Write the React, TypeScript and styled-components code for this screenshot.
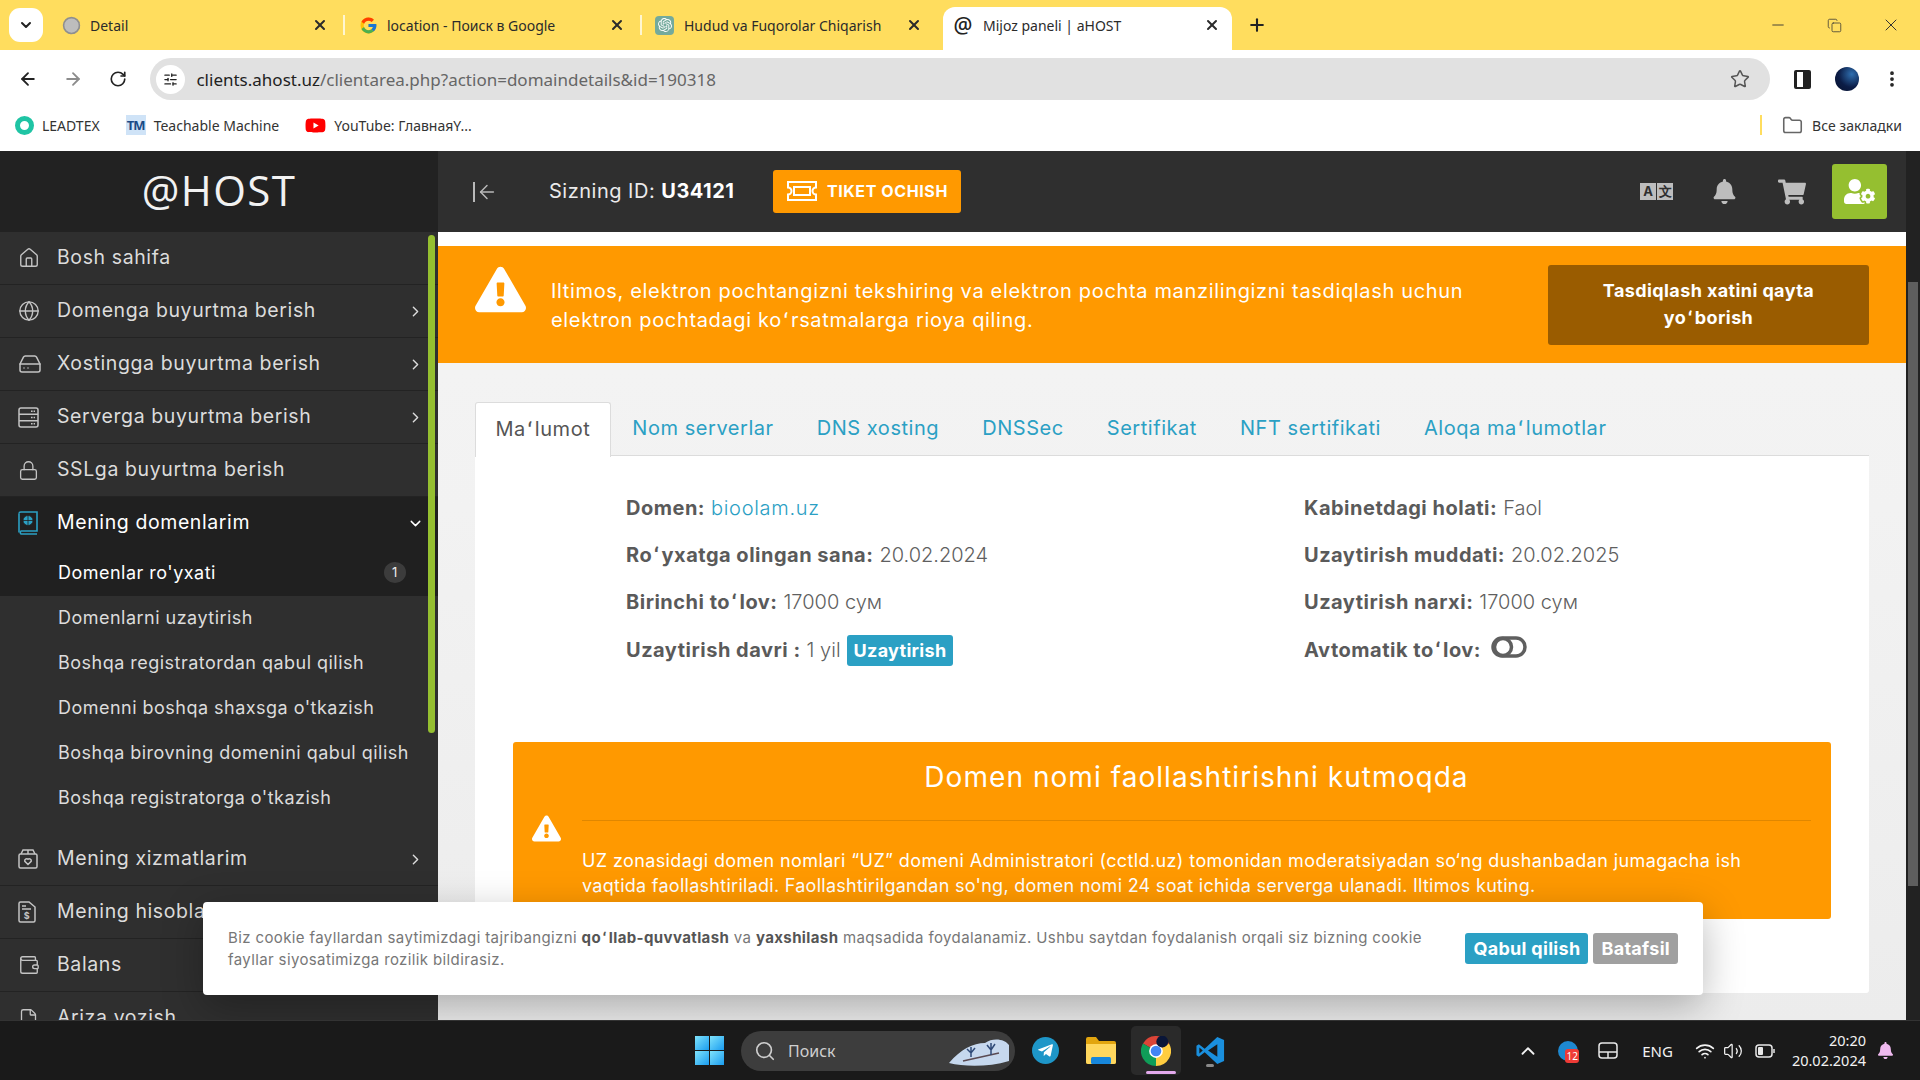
import React from "react";
import styled, { createGlobalStyle } from "styled-components";
import {
  ArrowLeft,
  ArrowRight,
  ChevronDown,
  ChevronRight,
  ChevronUp,
  Copy,
  Earth,
  File,
  Folder,
  Globe,
  HardDrive,
  House,
  Lock,
  Minus,
  MoreVertical,
  Plus,
  RotateCw,
  Search,
  SlidersHorizontal,
  Star,
  Volume2,
  Wallet,
  Wifi,
  X,
} from "lucide-react";
import { FaBell, FaExclamationTriangle, FaShoppingCart, FaTelegramPlane, FaUserCog, FaYoutube } from "react-icons/fa";
import { FcGoogle } from "react-icons/fc";
import { SiOpenai } from "react-icons/si";

const mont = `Inter, "Liberation Sans", sans-serif`;
const ui = `"Noto Sans", "Liberation Sans", sans-serif`;

const GlobalStyle = createGlobalStyle`
  html, body { margin: 0; padding: 0; width: 1920px; height: 1080px; overflow: hidden; }
  body { font-family: ${ui}; background: #fff; }
  * { box-sizing: border-box; }
`;

const Screen = styled.div`
  width: 1920px;
  height: 1080px;
  display: flex;
  flex-direction: column;
  overflow: hidden;
`;

/* browser tabs */
const TabStrip = styled.div`
  height: 50px;
  flex: none;
  background: #ffdd5e;
  display: flex;
  align-items: flex-end;
  padding-left: 9px;
`;

const TabMenuBtn = styled.div`
  width: 34px;
  height: 34px;
  margin: 0 6px 8px 0;
  background: #fff;
  border-radius: 11px;
  display: flex;
  align-items: center;
  justify-content: center;
  color: #222;
`;

const BrowserTab = styled.div<{ $active?: boolean; $sep?: boolean }>`
  width: ${(p) => (p.$active ? "289px" : "297px")};
  height: ${(p) => (p.$active ? "43px" : "50px")};
  margin-left: ${(p) => (p.$active ? "3px" : "0")};
  padding: ${(p) => (p.$active ? "0 12px 7px 10px" : "0 18px 0 12px")};
  display: flex;
  align-items: center;
  gap: ${(p) => (p.$active ? "10px" : "9px")};
  background: ${(p) => (p.$active ? "#fff" : "transparent")};
  border-radius: 12px 12px 0 0;
  position: relative;
  color: #2b2b2b;
  font-size: 14px;
  &::after {
    content: "";
    display: ${(p) => (p.$sep ? "block" : "none")};
    position: absolute;
    right: 1px;
    top: 15px;
    width: 2px;
    height: 20px;
    background: #fff6d0;
  }
`;

const Favicon = styled.span`
  width: 20px;
  height: 20px;
  flex: none;
  display: flex;
  align-items: center;
  justify-content: center;
  font-size: 21px;
  font-weight: 500;
  color: #222;
`;

const GptIcon = styled.span`
  width: 19px;
  height: 19px;
  flex: none;
  margin-right: 1px;
  border-radius: 4px;
  background: #74aa9c;
  color: #fff;
  display: flex;
  align-items: center;
  justify-content: center;
`;

const TabTitle = styled.span`
  flex: 1;
  white-space: nowrap;
  overflow: hidden;
`;

const NewTab = styled.div`
  margin: 0 0 15px 15px;
  color: #222;
  display: flex;
`;

const WindowControls = styled.div`
  margin-left: auto;
  height: 50px;
  display: flex;
  align-items: center;
  gap: 39.5px;
  padding-right: 19px;
  color: #333;
`;

/* address bar */
const Toolbar = styled.div`
  height: 55px;
  flex: none;
  background: #fff;
  display: flex;
  align-items: center;
  padding: 3px 18px 0 18px;
`;

const NavBtn = styled.span<{ $muted?: boolean }>`
  width: 45.5px;
  display: flex;
  color: ${(p) => (p.$muted ? "#8c8c8c" : "#222")};
`;

const Omnibox = styled.div`
  margin-left: -4px;
  width: 1620px;
  height: 42px;
  background: #e1e1e1;
  border-radius: 21px;
  display: flex;
  align-items: center;
  padding: 0 20px 0 6px;
  font-size: 17px;
  color: #666;
`;

const SiteInfo = styled.span`
  width: 29px;
  height: 29px;
  border-radius: 50%;
  background: #fff;
  margin-right: 11px;
  display: flex;
  align-items: center;
  justify-content: center;
  color: #222;
`;

const UrlHost = styled.span`
  color: #222;
`;

const StarBox = styled.span`
  margin-left: auto;
  display: flex;
  color: #555;
`;

const ToolActions = styled.div`
  display: flex;
  align-items: center;
  margin-left: 24px;
  gap: 23.5px;
  color: #222;
`;

const SidePanelIcon = styled.span`
  width: 17px;
  height: 19px;
  border: 2.5px solid #222;
  border-left-width: 3px;
  border-right-width: 8px;
  border-radius: 2px;
`;

const Avatar = styled.span`
  width: 24px;
  height: 24px;
  border-radius: 50%;
  background: radial-gradient(circle at 70% 30%, #2f6fb0 0%, #0b1c46 55%, #08122e 100%);
`;

/* bookmarks */
const BookmarkBar = styled.div`
  height: 46px;
  flex: none;
  background: #fff;
  display: flex;
  align-items: center;
  padding: 0 18px 6px 15px;
  font-size: 14px;
  color: #333;
`;

const Bookmark = styled.div`
  display: flex;
  align-items: center;
  gap: 8px;
  margin-right: 26px;
`;

const LeadIcon = styled.span`
  width: 19px;
  height: 19px;
  border-radius: 50%;
  border: 5px solid #1fc4a4;
  background: #fff;
`;

const TmIcon = styled.span`
  width: 20px;
  height: 20px;
  background: #cfe3f7;
  color: #1a4a86;
  font-size: 13px;
  font-weight: 700;
  display: flex;
  align-items: center;
  justify-content: center;
  letter-spacing: -1px;
`;

const AllBookmarks = styled.div`
  margin-left: auto;
  display: flex;
  align-items: center;
  gap: 9px;
  border-left: 2px solid #ffdd5e;
  padding-left: 20px;
  height: 20px;
  color: #333;
  svg { color: #666; }
`;

/* site */
const Main = styled.div`
  flex: 1;
  min-height: 0;
  display: flex;
  position: relative;
  overflow: hidden;
  font-family: ${mont};
`;

const Sidebar = styled.aside`
  width: 438px;
  flex: none;
  background: #2f2f2f;
  display: flex;
  flex-direction: column;
  overflow: hidden;
`;

const LogoBar = styled.div`
  height: 81px;
  flex: none;
  background: #222;
  color: #f2f2f2;
  display: flex;
  align-items: center;
  justify-content: center;
  padding-bottom: 4px;
  font-family: "Open Sans", sans-serif;
  font-size: 42px;
  letter-spacing: 1.4px;
  font-weight: 400;
`;

const Nav = styled.nav`
  position: relative;
  flex: 1;
  min-height: 0;
`;

const NavThumb = styled.div`
  position: absolute;
  left: 428px;
  top: 3px;
  width: 7px;
  height: 498px;
  border-radius: 4px;
  background: #95bf30;
`;

const NavItem = styled.div<{ $open?: boolean }>`
  height: 53px;
  display: flex;
  align-items: center;
  padding: 0 14px 0 18px;
  border-bottom: 1px solid ${(p) => (p.$open ? "transparent" : "#232323")};
  background: ${(p) => (p.$open ? "#202020" : "transparent")};
  color: ${(p) => (p.$open ? "#fff" : "#dcdcdc")};
  font-size: 19.5px;
  letter-spacing: 0.6px;
`;

const NavIcon = styled.span<{ $open?: boolean }>`
  width: 39px;
  flex: none;
  display: flex;
  color: ${(p) => (p.$open ? "#2ba0c4" : "#c4c4c4")};
`;

const NavLabel = styled.span`
  flex: 1;
  white-space: nowrap;
  padding-bottom: 2px;
`;

const SubMenu = styled.div`
  padding-bottom: 12px;
`;

const SubItem = styled.div<{ $active?: boolean }>`
  height: ${(p) => (p.$active ? "46px" : "45px")};
  display: flex;
  align-items: center;
  padding: 0 32px 2px 58px;
  font-size: 18px;
  letter-spacing: 0.48px;
  color: ${(p) => (p.$active ? "#fff" : "#dcdcdc")};
  background: ${(p) => (p.$active ? "#202020" : "transparent")};
  white-space: nowrap;
`;

const CountBadge = styled.span`
  margin-left: auto;
  width: 22px;
  height: 21px;
  border-radius: 50%;
  background: #3c3c3c;
  color: #eee;
  font-size: 13px;
  display: flex;
  align-items: center;
  justify-content: center;
`;

const RightCol = styled.div`
  flex: 1;
  min-width: 0;
  display: flex;
  flex-direction: column;
`;

const Header = styled.header`
  height: 81px;
  flex: none;
  background: #2f2f2f;
  display: flex;
  align-items: center;
  padding: 0 19px 0 35px;
  color: #eaeaea;
`;

const CollapseBtn = styled.span`
  display: flex;
  align-items: center;
  color: #b9b9b9;
  margin-right: 51px;
`;

const CollapseBar = styled.span`
  width: 2px;
  height: 20px;
  background: #b9b9b9;
  margin-right: 1px;
`;

const ClientId = styled.span`
  font-size: 20px;
  letter-spacing: 0.5px;
  margin-right: 39px;
  padding-bottom: 1px;
  b { font-weight: 700; color: #fff; }
`;

const TicketBtn = styled.div`
  width: 188px;
  height: 43px;
  background: #ff9900;
  border-radius: 3px;
  color: #fff;
  display: flex;
  align-items: center;
  justify-content: center;
  gap: 10px;
  font-size: 16px;
  font-weight: 700;
  letter-spacing: 0.6px;
  padding-bottom: 1px;
`;

const HeaderIcons = styled.div`
  margin-left: auto;
  display: flex;
  align-items: center;
  color: #bdbdbd;
`;

const TranslateIcon = styled.span`
  display: flex;
  width: 33px;
  height: 17px;
  gap: 1px;
  margin-right: 39px;
`;

const TranslateCell = styled.span`
  flex: 1;
  background: #bdbdbd;
  color: #2f2f2f;
  font-size: 13px;
  font-weight: 700;
  line-height: 17px;
  text-align: center;
`;

const CartBox = styled.span`
  display: flex;
  margin: 0 26px 0 41px;
`;

const UserBtn = styled.span`
  width: 55px;
  height: 55px;
  background: #95bf30;
  border-radius: 3px;
  color: #fff;
  display: flex;
  align-items: center;
  justify-content: center;
`;

const Content = styled.main`
  flex: 1;
  min-height: 0;
  background: linear-gradient(#f4f4f4 0%, #f2f2f2 35%, #ececec 100%);
  overflow: hidden;
  padding-top: 14px;
  box-shadow: inset 0 14px 0 #fff;
`;

const TopAlert = styled.div`
  height: 117px;
  background: #ff9900;
  color: #fff;
  display: flex;
  padding: 19px 37px 0 37px;
`;

const TopAlertIcon = styled.span`
  width: 51px;
  height: 51px;
  margin-top: -1px;
  flex: none;
  display: flex;
  margin-right: 25px;
`;

const TopAlertText = styled.p`
  margin: 12px 0 0;
  font-size: 20px;
  line-height: 29px;
  letter-spacing: 0.66px;
  white-space: nowrap;
`;

const ResendBtn = styled.div`
  margin-left: auto;
  width: 321px;
  height: 80px;
  background: #9a5c00;
  border-radius: 3px;
  padding-top: 12px;
  text-align: center;
  font-size: 18px;
  font-weight: 700;
  line-height: 27px;
  letter-spacing: 0.4px;
`;

const TabsWrap = styled.div`
  padding: 39px 37px 0;
`;

const TabRow = styled.div`
  display: flex;
  height: 54px;
  border-bottom: 1px solid #dcdcdc;
`;

const PageTab = styled.div<{ $active?: boolean }>`
  height: ${(p) => (p.$active ? "55px" : "53px")};
  padding: 0 ${(p) => (p.$active ? "19.5px" : "21.5px")} 2px;
  display: flex;
  align-items: center;
  font-size: 20px;
  letter-spacing: 0.55px;
  white-space: nowrap;
  color: ${(p) => (p.$active ? "#555" : "#2ba0c4")};
  background: ${(p) => (p.$active ? "#fff" : "transparent")};
  border: ${(p) => (p.$active ? "1px solid #dcdcdc" : "none")};
  border-bottom: none;
  border-radius: 3px 3px 0 0;
`;

const Okina = styled.span`
  margin: 0 1.5px;
`;

const Card = styled.section`
  background: #fff;
  height: 537px;
  padding: 28px 38px 0;
  border-radius: 0 0 3px 3px;
`;

const InfoGrid = styled.div`
  display: grid;
  grid-template-columns: 678px 1fr;
  grid-auto-rows: 47.3px;
  padding-left: 113px;
`;

const InfoCell = styled.div`
  display: flex;
  align-items: center;
  gap: 6px;
  font-size: 20px;
  font-weight: 300;
  color: #5f5f5f;
  white-space: nowrap;
  letter-spacing: 0;
  b { font-weight: 700; color: #5a5a5a; letter-spacing: 0.5px; }
`;

const InfoLink = styled.span`
  color: #2ba0c4;
  letter-spacing: 0.7px;
`;

const SmallBtn = styled.span<{ $gray?: boolean }>`
  height: 31px;
  padding: 0 7px;
  margin-top: 1px;
  display: inline-flex;
  align-items: center;
  border-radius: 3px;
  background: ${(p) => (p.$gray ? "#a0a0a0" : "#2ba0c4")};
  color: #fff;
  font-size: 18px;
  font-weight: 700;
  letter-spacing: 0.3px;
`;

const CookieBtn = styled(SmallBtn)`
  padding: 0 8px;
  margin-top: 0;
`;

const Toggle = styled.span`
  display: inline-flex;
  position: relative;
  top: -3px;
  margin-left: 4px;
  color: #5f5f5f;
`;

const PendingBox = styled.div`
  margin-top: 69px;
  background: #ff9900;
  border-radius: 3px;
  color: #fff;
  display: flex;
  align-items: center;
  padding: 17px 20px 21px 19px;
`;

const PendingIcon = styled.span`
  width: 50px;
  flex: none;
  display: flex;
`;

const PendingBody = styled.div`
  flex: 1;
`;

const PendingTitle = styled.div`
  text-align: center;
  font-size: 28px;
  line-height: 36px;
  letter-spacing: 1.05px;
  padding-bottom: 25px;
  border-bottom: 1px solid #e08700;
  margin-bottom: 27px;
`;

const PendingLine = styled.div<{ $spacing: number }>`
  font-size: 18px;
  line-height: 25px;
  letter-spacing: ${(p) => p.$spacing}px;
  white-space: nowrap;
`;

const ScrollTrack = styled.div`
  width: 14px;
  flex: none;
  background: #222;
  padding: 131px 2px 0;
`;

const ScrollThumb = styled.div`
  height: 604px;
  background: #5e5e5e;
`;

const CookieBar = styled.div`
  position: absolute;
  left: 203px;
  top: 751px;
  width: 1500px;
  height: 93px;
  background: #fff;
  border-radius: 4px;
  box-shadow: 0 12px 40px rgba(0, 0, 0, 0.28);
  display: flex;
  align-items: center;
  padding: 0 25px 0 25px;
`;

const CookieText = styled.p`
  margin: 0;
  font-size: 15px;
  line-height: 22px;
  color: #777;
  letter-spacing: 0.38px;
  white-space: nowrap;
  b { color: #555; font-weight: 700; }
`;

const CookieActions = styled.div`
  margin-left: auto;
  display: flex;
  gap: 5px;
`;

/* taskbar */
const Taskbar = styled.div`
  height: 60px;
  flex: none;
  background: #1a1a1a;
  border-top: 1px solid #333;
  display: flex;
  align-items: center;
  position: relative;
  padding-left: 695px;
  color: #f2f2f2;
`;

const WinLogo = styled.span`
  width: 29px;
  height: 29px;
  display: grid;
  grid-template-columns: 1fr 1fr;
  grid-template-rows: 1fr 1fr;
  gap: 1.5px;
`;

const WinPane = styled.i`
  background: linear-gradient(135deg, #7fe3fb, #1a9cf0);
`;

const SearchPill = styled.div`
  margin-left: 17px;
  width: 274px;
  height: 40px;
  border-radius: 20px;
  background: #3d3d3d;
  display: flex;
  align-items: center;
  padding-left: 13px;
  gap: 12px;
  color: #cfcfcf;
  font-size: 16px;
`;

const SearchArt = styled.svg`
  margin-left: auto;
  margin-right: 4px;
`;

const TelegramIcon = styled.span`
  margin-left: 17px;
  width: 27px;
  height: 27px;
  border-radius: 50%;
  background: #1e96c8;
  color: #fff;
  display: flex;
  align-items: center;
  justify-content: center;
`;

const FolderIcon = styled.svg`
  margin-left: 27px;
`;

const ActiveApp = styled.span`
  margin-left: 15px;
  width: 50px;
  height: 49px;
  border-radius: 5px;
  background: #2a2a2a;
  display: flex;
  align-items: center;
  justify-content: center;
  position: relative;
`;

const AppMark = styled.span<{ $pink?: boolean }>`
  position: absolute;
  bottom: ${(p) => (p.$pink ? "1px" : "-1px")};
  left: ${(p) => (p.$pink ? "15px" : "11px")};
  width: ${(p) => (p.$pink ? "30px" : "8px")};
  height: 3px;
  border-radius: 2px;
  background: ${(p) => (p.$pink ? "#e3a9ec" : "#8a8a8a")};
`;

const CodeIcon = styled.span`
  margin-left: 14px;
  display: flex;
  position: relative;
`;

const Tray = styled.div`
  margin-left: auto;
  display: flex;
  align-items: center;
  padding-right: 26px;
  font-size: 15px;
`;

const TrayItem = styled.span<{ $gap: number }>`
  display: flex;
  margin-left: ${(p) => p.$gap}px;
`;

const UpdateDot = styled.span`
  width: 20px;
  height: 20px;
  border-radius: 50%;
  background: #1e88d0;
  position: relative;
`;

const RedCount = styled.span`
  position: absolute;
  right: -1px;
  bottom: -2px;
  width: 14px;
  height: 14px;
  background: #ef3b36;
  border-radius: 3px;
  font-size: 10px;
  line-height: 14px;
  text-align: center;
  color: #fff;
`;

const Clock = styled.div`
  margin-left: 17px;
  padding-bottom: 2px;
  text-align: right;
  font-size: 14.5px;
  line-height: 20px;
`;

const withOkina = (text: string) =>
  text.split("ʻ").flatMap((part, i) => (i ? [<Okina key={i}>ʻ</Okina>, part] : [part]));

const ChromeLogo = () => (
  <svg width="30" height="30" viewBox="0 0 48 48">
    <path d="M24 24 L44.8 12 A24 24 0 0 0 3.2 12 Z" fill="#db4437" />
    <path d="M24 24 L3.2 12 A24 24 0 0 0 24 48 Z" fill="#0f9d58" />
    <path d="M24 24 L24 48 A24 24 0 0 0 44.8 12 Z" fill="#ffcd40" />
    <circle cx="24" cy="24" r="11" fill="#fff" />
    <circle cx="24" cy="24" r="8.5" fill="#4285f4" />
    <circle cx="34" cy="9" r="9.5" fill="#0a1638" />
  </svg>
);

const VsCodeLogo = () => (
  <svg width="31" height="31" viewBox="0 0 32 32">
    <path d="M23 2 L30 5.2 V26.8 L23 30 L10 17.8 L4 22.4 L1.5 21 V11 L4 9.6 L10 14.2 Z" fill="#1a8fdd" />
    <path d="M23 9.5 L13.5 16 L23 22.5 Z" fill="#1a1a1a" />
    <path d="M4.5 13 L8 16 L4.5 19 Z" fill="#1a1a1a" />
  </svg>
);

const TicketIcon = () => (
  <svg width="30" height="20" viewBox="0 0 30 20" fill="none" stroke="currentColor" strokeWidth="2">
    <path d="M1 1H29V6.500A3.500 3.500 0 0 0 29 13.500V19H1V13.500A3.500 3.500 0 0 0 1 6.500Z" />
    <rect x="7" y="6" width="16" height="8" />
  </svg>
);

const ServerIcon = () => (
  <svg width="21" height="21" viewBox="0 0 21 21" fill="none" stroke="currentColor" strokeWidth="1.5">
    <rect x="1" y="1" width="19" height="19" rx="2" />
    <path d="M1 7.300H20M1 13.700H20" />
    <path d="M13 4.200H17M13 10.500H17M13 16.800H17" strokeDasharray="1.600 1" />
  </svg>
);

const PassportIcon = () => (
  <svg width="20" height="24" viewBox="0 0 20 24" fill="none" stroke="currentColor" strokeWidth="1.6">
    <path d="M1 2.5A1.7 1.7 0 0 1 2.7 1H19V20H3a2 2 0 0 0 0 3H19" />
    <path d="M1 2.5V21.500" />
    <circle cx="10" cy="9.5" r="5" fill="currentColor" stroke="#202020" strokeWidth="0.8" />
    <path d="M5 9.5H15M10 4.5V14.500" stroke="#202020" strokeWidth="0.8" />
  </svg>
);

const BoxHeartIcon = () => (
  <svg width="20" height="20" viewBox="0 0 20 20" fill="none" stroke="currentColor" strokeWidth="1.5">
    <rect x="1" y="5" width="18" height="14" rx="1.5" />
    <path d="M3 5L5 1H15L17 5M10 1V5" />
    <path d="M10 15.500L6.800 12.300A2 2 0 0 1 10 10.200A2 2 0 0 1 13.200 12.300Z" />
  </svg>
);

const InvoiceIcon = () => (
  <svg width="18" height="22" viewBox="0 0 18 22" fill="none" stroke="currentColor" strokeWidth="1.5">
    <path d="M1 2.500A1.500 1.500 0 0 1 2.500 1H11L17 6V19.500A1.500 1.500 0 0 1 15.500 21H2.500A1.500 1.500 0 0 1 1 19.500Z" />
    <path d="M4 5H8M4 8H13" />
    <text x="9" y="18" fontSize="9" textAnchor="middle" fill="currentColor" stroke="none" fontWeight="700">$</text>
  </svg>
);

const menuTop = [
  { label: "Bosh sahifa", icon: <House size={22} strokeWidth={1.5} /> },
  { label: "Domenga buyurtma berish", icon: <Globe size={22} strokeWidth={1.5} />, arrow: true },
  { label: "Xostingga buyurtma berish", icon: <HardDrive size={24} strokeWidth={1.5} />, arrow: true },
  { label: "Serverga buyurtma berish", icon: <ServerIcon />, arrow: true },
  { label: "SSLga buyurtma berish", icon: <Lock size={21} strokeWidth={1.5} /> },
];

const subLinks = [
  "Domenlarni uzaytirish",
  "Boshqa registratordan qabul qilish",
  "Domenni boshqa shaxsga o'tkazish",
  "Boshqa birovning domenini qabul qilish",
  "Boshqa registratorga o'tkazish",
];

const menuBottom = [
  { label: "Mening xizmatlarim", icon: <BoxHeartIcon />, arrow: true },
  { label: "Mening hisoblarim", icon: <InvoiceIcon /> },
  { label: "Balans", icon: <Wallet size={22} strokeWidth={1.5} /> },
  { label: "Ariza yozish", icon: <File size={21} strokeWidth={1.5} /> },
];

const pageTabs = ["Nom serverlar", "DNS xosting", "DNSSec", "Sertifikat", "NFT sertifikati", "Aloqa maʻlumotlar"];

const App = () => {
  return (
    <Screen>
      <GlobalStyle />
      <TabStrip>
        <TabMenuBtn>
          <ChevronDown size={16} strokeWidth={3} />
        </TabMenuBtn>
        <BrowserTab $sep>
          <Favicon>
            <Earth size={19} color="#8f8f8f" fill="#bdbdbd" />
          </Favicon>
          <TabTitle>Detail</TabTitle>
          <X size={16} strokeWidth={3} />
        </BrowserTab>
        <BrowserTab $sep>
          <Favicon>
            <FcGoogle size={19} />
          </Favicon>
          <TabTitle>location - Поиск в Google</TabTitle>
          <X size={16} strokeWidth={3} />
        </BrowserTab>
        <BrowserTab>
          <GptIcon>
            <SiOpenai size={14} />
          </GptIcon>
          <TabTitle>Hudud va Fuqorolar Chiqarish</TabTitle>
          <X size={16} strokeWidth={3} />
        </BrowserTab>
        <BrowserTab $active>
          <Favicon>@</Favicon>
          <TabTitle>Mijoz paneli | aHOST</TabTitle>
          <X size={16} strokeWidth={3} />
        </BrowserTab>
        <NewTab>
          <Plus size={20} strokeWidth={2.5} />
        </NewTab>
        <WindowControls>
          <Minus size={18} strokeWidth={1.2} />
          <Copy size={15} strokeWidth={1.2} />
          <X size={20} strokeWidth={1.2} />
        </WindowControls>
      </TabStrip>

      <Toolbar>
        <NavBtn>
          <ArrowLeft size={20} strokeWidth={2.2} />
        </NavBtn>
        <NavBtn $muted>
          <ArrowRight size={20} strokeWidth={2.2} />
        </NavBtn>
        <NavBtn>
          <RotateCw size={18} strokeWidth={2.2} />
        </NavBtn>
        <Omnibox>
          <SiteInfo>
            <SlidersHorizontal size={15} strokeWidth={2} />
          </SiteInfo>
          <UrlHost>clients.ahost.uz</UrlHost>/clientarea.php?action=domaindetails&amp;id=190318
          <StarBox>
            <Star size={20} strokeWidth={1.8} />
          </StarBox>
        </Omnibox>
        <ToolActions>
          <SidePanelIcon />
          <Avatar />
          <MoreVertical size={20} strokeWidth={2.5} />
        </ToolActions>
      </Toolbar>

      <BookmarkBar>
        <Bookmark>
          <LeadIcon />
          LEADTEX
        </Bookmark>
        <Bookmark>
          <TmIcon>TM</TmIcon>
          Teachable Machine
        </Bookmark>
        <Bookmark>
          <FaYoutube size={21} color="#f00" />
          YouTube: ГлавнаяY...
        </Bookmark>
        <AllBookmarks>
          <Folder size={21} strokeWidth={1.8} />
          Все закладки
        </AllBookmarks>
      </BookmarkBar>

      <Main>
        <Sidebar>
          <LogoBar>@HOST</LogoBar>
          <Nav>
            {menuTop.map((item) => (
              <NavItem key={item.label}>
                <NavIcon>{item.icon}</NavIcon>
                <NavLabel>{item.label}</NavLabel>
                {item.arrow && <ChevronRight size={17} strokeWidth={2} />}
              </NavItem>
            ))}
            <NavItem $open>
              <NavIcon $open>
                <PassportIcon />
              </NavIcon>
              <NavLabel>Mening domenlarim</NavLabel>
              <ChevronDown size={17} strokeWidth={2} />
            </NavItem>
            <SubMenu>
              <SubItem $active>
                Domenlar ro'yxati
                <CountBadge>1</CountBadge>
              </SubItem>
              {subLinks.map((link) => (
                <SubItem key={link}>{link}</SubItem>
              ))}
            </SubMenu>
            {menuBottom.map((item) => (
              <NavItem key={item.label}>
                <NavIcon>{item.icon}</NavIcon>
                <NavLabel>{item.label}</NavLabel>
                {item.arrow && <ChevronRight size={17} strokeWidth={2} />}
              </NavItem>
            ))}
            <NavThumb />
          </Nav>
        </Sidebar>

        <RightCol>
          <Header>
            <CollapseBtn>
              <CollapseBar />
              <ArrowLeft size={22} strokeWidth={1.6} />
            </CollapseBtn>
            <ClientId>
              Sizning ID: <b>U34121</b>
            </ClientId>
            <TicketBtn>
              <TicketIcon />
              TIKET OCHISH
            </TicketBtn>
            <HeaderIcons>
              <TranslateIcon>
                <TranslateCell>A</TranslateCell>
                <TranslateCell>文</TranslateCell>
              </TranslateIcon>
              <FaBell size={25} />
              <CartBox>
                <FaShoppingCart size={28} />
              </CartBox>
              <UserBtn>
                <FaUserCog size={31} />
              </UserBtn>
            </HeaderIcons>
          </Header>

          <Content>
            <TopAlert>
              <TopAlertIcon>
                <FaExclamationTriangle size={51} />
              </TopAlertIcon>
              <TopAlertText>
                Iltimos, elektron pochtangizni tekshiring va elektron pochta manzilingizni tasdiqlash uchun
                <br />
                {withOkina("elektron pochtadagi koʻrsatmalarga rioya qiling.")}
              </TopAlertText>
              <ResendBtn>
                Tasdiqlash xatini qayta
                <br />
                {withOkina("yoʻborish")}
              </ResendBtn>
            </TopAlert>

            <TabsWrap>
              <TabRow>
                <PageTab $active>{withOkina("Maʻlumot")}</PageTab>
                {pageTabs.map((tab) => (
                  <PageTab key={tab}>{withOkina(tab)}</PageTab>
                ))}
              </TabRow>
              <Card>
                <InfoGrid>
                  <InfoCell>
                    <b>Domen:</b>
                    <InfoLink>bioolam.uz</InfoLink>
                  </InfoCell>
                  <InfoCell>
                    <b>Kabinetdagi holati:</b> Faol
                  </InfoCell>
                  <InfoCell>
                    <b>{withOkina("Roʻyxatga olingan sana:")}</b> 20.02.2024
                  </InfoCell>
                  <InfoCell>
                    <b>Uzaytirish muddati:</b> 20.02.2025
                  </InfoCell>
                  <InfoCell>
                    <b>{withOkina("Birinchi toʻlov:")}</b> 17000 сум
                  </InfoCell>
                  <InfoCell>
                    <b>Uzaytirish narxi:</b> 17000 сум
                  </InfoCell>
                  <InfoCell>
                    <b>Uzaytirish davri :</b> 1 yil <SmallBtn>Uzaytirish</SmallBtn>
                  </InfoCell>
                  <InfoCell>
                    <b>{withOkina("Avtomatik toʻlov:")}</b>
                    <Toggle>
                      <svg width="36" height="24" viewBox="0 0 36 24" fill="none" stroke="currentColor" strokeWidth="3.5">
                        <rect x="2" y="3" width="32" height="18" rx="9" />
                        <circle cx="12" cy="12" r="8.500" />
                      </svg>
                    </Toggle>
                  </InfoCell>
                </InfoGrid>
                <PendingBox>
                  <PendingIcon>
                    <FaExclamationTriangle size={29} />
                  </PendingIcon>
                  <PendingBody>
                    <PendingTitle>Domen nomi faollashtirishni kutmoqda</PendingTitle>
                    <PendingLine $spacing={0.39}>
                      UZ zonasidagi domen nomlari “UZ” domeni Administratori (cctld.uz) tomonidan moderatsiyadan so‘ng dushanbadan jumagacha ish
                    </PendingLine>
                    <PendingLine $spacing={0.275}>
                      vaqtida faollashtiriladi. Faollashtirilgandan so'ng, domen nomi 24 soat ichida serverga ulanadi. Iltimos kuting.
                    </PendingLine>
                  </PendingBody>
                </PendingBox>
              </Card>
            </TabsWrap>
          </Content>
        </RightCol>

        <ScrollTrack>
          <ScrollThumb />
        </ScrollTrack>

        <CookieBar>
          <CookieText>
            Biz cookie fayllardan saytimizdagi tajribangizni <b>{withOkina("qoʻllab-quvvatlash")}</b> va <b>yaxshilash</b> maqsadida foydalanamiz. Ushbu saytdan foydalanish orqali siz bizning cookie
            <br />
            fayllar siyosatimizga rozilik bildirasiz.
          </CookieText>
          <CookieActions>
            <CookieBtn>Qabul qilish</CookieBtn>
            <CookieBtn $gray>Batafsil</CookieBtn>
          </CookieActions>
        </CookieBar>
      </Main>

      <Taskbar>
        <WinLogo>
          <WinPane />
          <WinPane />
          <WinPane />
          <WinPane />
        </WinLogo>
        <SearchPill>
          <Search size={22} strokeWidth={1.8} />
          Поиск
          <SearchArt width="62" height="32" viewBox="0 0 62 32">
            <path d="M0 28 C12 14 24 8 36 8 C44 2 56 4 60 10 L60 26 C40 32 16 32 0 28Z" fill="#c6d8ee" />
            <path d="M14 26 L50 18" stroke="#5a4a52" strokeWidth="1.500" />
            <path d="M22 22V12M18 14L22 18L26 13M42 20V8M38 10L42 15L46 9" stroke="#2f4a78" strokeWidth="1.500" fill="none" />
          </SearchArt>
        </SearchPill>
        <TelegramIcon>
          <FaTelegramPlane size={17} />
        </TelegramIcon>
        <FolderIcon width="30" height="27" viewBox="0 0 30 27">
          <path d="M0 2A2 2 0 0 1 2 0H10L13 4H28A2 2 0 0 1 30 6V25A2 2 0 0 1 28 27H2A2 2 0 0 1 0 25Z" fill="#e2a50f" />
          <path d="M0 7H30V25A2 2 0 0 1 28 27H2A2 2 0 0 1 0 25Z" fill="#ffd75e" />
          <rect x="5" y="20" width="20" height="7" rx="1.500" fill="#1787dc" />
        </FolderIcon>
        <ActiveApp>
          <ChromeLogo />
          <AppMark $pink />
        </ActiveApp>
        <CodeIcon>
          <VsCodeLogo />
          <AppMark />
        </CodeIcon>
        <Tray>
          <ChevronUp size={22} strokeWidth={2} />
          <TrayItem $gap={19}>
            <UpdateDot>
              <RedCount>12</RedCount>
            </UpdateDot>
          </TrayItem>
          <TrayItem $gap={20}>
            <svg width="20" height="17" viewBox="0 0 20 17" fill="none" stroke="#e8e8e8" strokeWidth="1.500">
              <rect x="1" y="1" width="18" height="15" rx="3" />
              <path d="M1 10H19M10 10V16" />
            </svg>
          </TrayItem>
          <TrayItem $gap={24}>ENG</TrayItem>
          <TrayItem $gap={22}>
            <Wifi size={20} />
          </TrayItem>
          <TrayItem $gap={8}>
            <Volume2 size={20} strokeWidth={1.500} />
          </TrayItem>
          <TrayItem $gap={12}>
            <svg width="20" height="14" viewBox="0 0 20 14" fill="none" stroke="#e8e8e8" strokeWidth="1.500">
              <rect x="1" y="1" width="16" height="12" rx="3" />
              <rect x="3" y="3" width="5" height="8" rx="1" fill="#e8e8e8" stroke="none" />
              <path d="M19 5V9" />
            </svg>
          </TrayItem>
          <Clock>
            20:20
            <br />
            20.02.2024
          </Clock>
          <TrayItem $gap={11}>
            <FaBell size={17} color="#efb9ef" />
          </TrayItem>
        </Tray>
      </Taskbar>
    </Screen>
  );
};

export default App;
